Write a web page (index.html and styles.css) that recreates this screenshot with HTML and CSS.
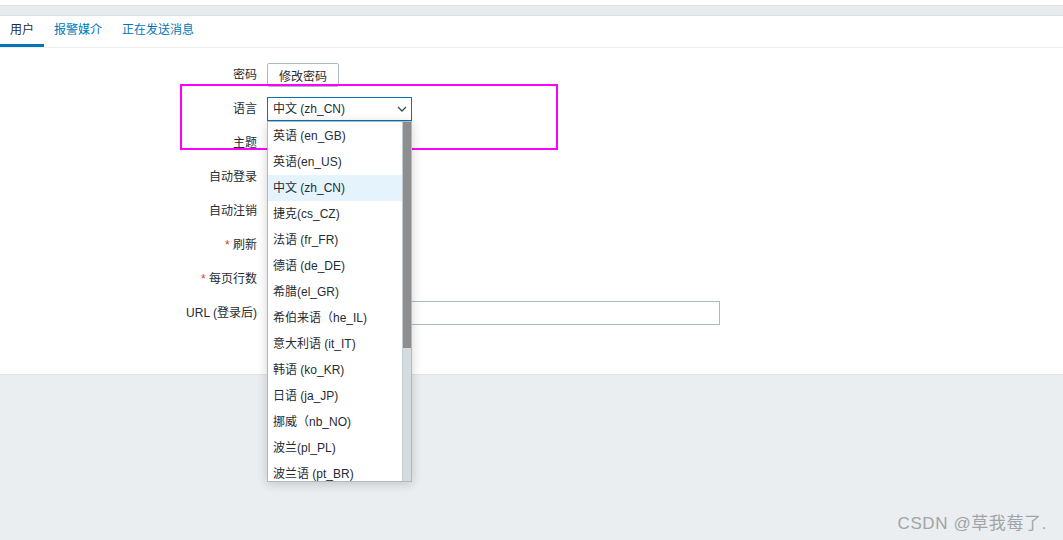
FILE: index.html
```html
<!DOCTYPE html>
<html>
<head>
<meta charset="utf-8">
<title>用户设置</title>
<link rel="stylesheet" href="styles.css">
</head>
<body>
<div class="topbar"></div>
<ul class="tabs">
	<li class="on">用户</li>
	<li>报警媒介</li>
	<li>正在发送消息</li>
</ul>
<div class="panel">
	<div class="form">
		<label>密码</label>
		<div class="ctl"><button class="btn">修改密码</button></div>

		<label>语言</label>
		<div class="ctl sel-wrap">
			<div class="select focus">中文 (zh_CN)
				<svg class="arr" width="10" height="6" viewBox="0 0 10 6"><path d="M1 1l4 4 4-4" fill="none" stroke="#3b4a52" stroke-width="1.3"/></svg>
			</div>
			<div class="dropdown">
				<ul class="opts">
					<li>英语 (en_GB)</li>
					<li>英语(en_US)</li>
					<li class="hover">中文 (zh_CN)</li>
					<li>捷克(cs_CZ)</li>
					<li>法语 (fr_FR)</li>
					<li>德语 (de_DE)</li>
					<li>希腊(el_GR)</li>
					<li>希伯来语（he_IL)</li>
					<li>意大利语 (it_IT)</li>
					<li>韩语 (ko_KR)</li>
					<li>日语 (ja_JP)</li>
					<li>挪威（nb_NO)</li>
					<li>波兰(pl_PL)</li>
					<li>波兰语 (pt_BR)</li>
				</ul>
				<div class="track"><div class="thumb"></div></div>
			</div>
		</div>

		<label>主题</label>
		<div class="ctl"><div class="select small"></div></div>

		<label>自动登录</label>
		<div class="ctl"><span class="chk"></span></div>

		<label>自动注销</label>
		<div class="ctl"><span class="chk"></span></div>

		<label><span class="req">*</span> 刷新</label>
		<div class="ctl"><input class="txt short" value=""></div>

		<label><span class="req">*</span> 每页行数</label>
		<div class="ctl"><input class="txt short" value=""></div>

		<label>URL (登录后)</label>
		<div class="ctl"><input class="txt long" value=""></div>
	</div>
</div>
<div class="mark"></div>
<p class="csdn">CSDN @草我莓了.</p>
</body>
</html>
```

FILE: styles.css
```css
html,body{
	height:100%;
}
body{
	margin:0;
	background:#ebeef0;
	color:#1f2c33;
	font-family:"Liberation Sans","Noto Sans CJK SC",sans-serif;
	font-size:12px;
	position:relative;
	overflow:hidden;
}
.topbar{
	height:10px;
	border-top:5px solid #fff;
	border-bottom:1px solid #dde2e5;
	background:#e8ebed;
	box-shadow:inset 0 1px 0 #dde2e5;
}
.tabs{
	margin:0;
	padding:0;
	list-style:none;
	display:flex;
	background:#fff;
	border-bottom:1px solid #ebeef0;
}
.tabs li{
	padding:0 10px;
	height:28px;
	line-height:29px;
	color:#0275b8;
	border-bottom:3px solid transparent;
}
.tabs li.on{
	color:#1f2c33;
	border-bottom-color:#0275b8;
}
.panel{
	background:#fff;
	padding:15px 0 49px;
	border-bottom:1px solid #dfe4e7;
}
.form{
	display:grid;
	grid-template-columns:257px auto;
	column-gap:10px;
	row-gap:10px;
	align-items:center;
}
.form label{
	text-align:right;
	line-height:24px;
}
.req{
	color:#e33734;
}
.ctl{
	height:24px;
	display:flex;
	align-items:center;
}
.btn{
	height:24px;
	width:72px;
	padding:0;
	background:#fff;
	border:1px solid #acbbc2;
	border-radius:2px;
	color:#1f2c33;
	font:inherit;
	font-size:12px;
}
.sel-wrap{
	position:relative;
}
.select{
	box-sizing:border-box;
	width:145px;
	height:24px;
	line-height:22px;
	padding:0 5px;
	border:1px solid #acbbc2;
	background:#fff;
	position:relative;
}
.select.focus{
	border-color:#0275b8;
}
.select.small{
	width:120px;
}
.arr{
	position:absolute;
	right:4px;
	top:8px;
}
.dropdown{
	position:absolute;
	left:0;
	top:24px;
	width:145px;
	height:361px;
	box-sizing:border-box;
	border:1px solid #acbbc2;
	background:#fff;
	box-shadow:0 2px 10px rgba(0,0,0,0.18);
	overflow:hidden;
	z-index:5;
	display:flex;
}
.opts{
	list-style:none;
	margin:0;
	padding:1px 0 0;
	flex:1;
}
.opts li{
	height:26px;
	line-height:26px;
	padding-left:5px;
	white-space:nowrap;
}
.opts li.hover{
	background:#e5f3fd;
}
.track{
	width:8px;
	background:#d5dce0;
	border-left:1px solid #c2ccd1;
}
.thumb{
	height:226px;
	background:#8e8e8e;
}
.chk{
	width:12px;
	height:12px;
	border:1px solid #acbbc2;
}
.txt{
	box-sizing:border-box;
	height:24px;
	border:1px solid #acbbc2;
	padding:0 5px;
	font:inherit;
	color:#1f2c33;
	outline:none;
}
.txt.short{
	width:75px;
}
.txt.long{
	width:453px;
}
.mark{
	position:absolute;
	left:180px;
	top:84px;
	width:374px;
	height:62px;
	border:2px solid #ff00ff;
	pointer-events:none;
}
.csdn{
	position:absolute;
	right:16px;
	bottom:6px;
	margin:0;
	font-size:17px;
	letter-spacing:0.6px;
	color:#a0a4a6;
	font-family:"Liberation Sans","Noto Sans CJK SC",sans-serif;
}
```
